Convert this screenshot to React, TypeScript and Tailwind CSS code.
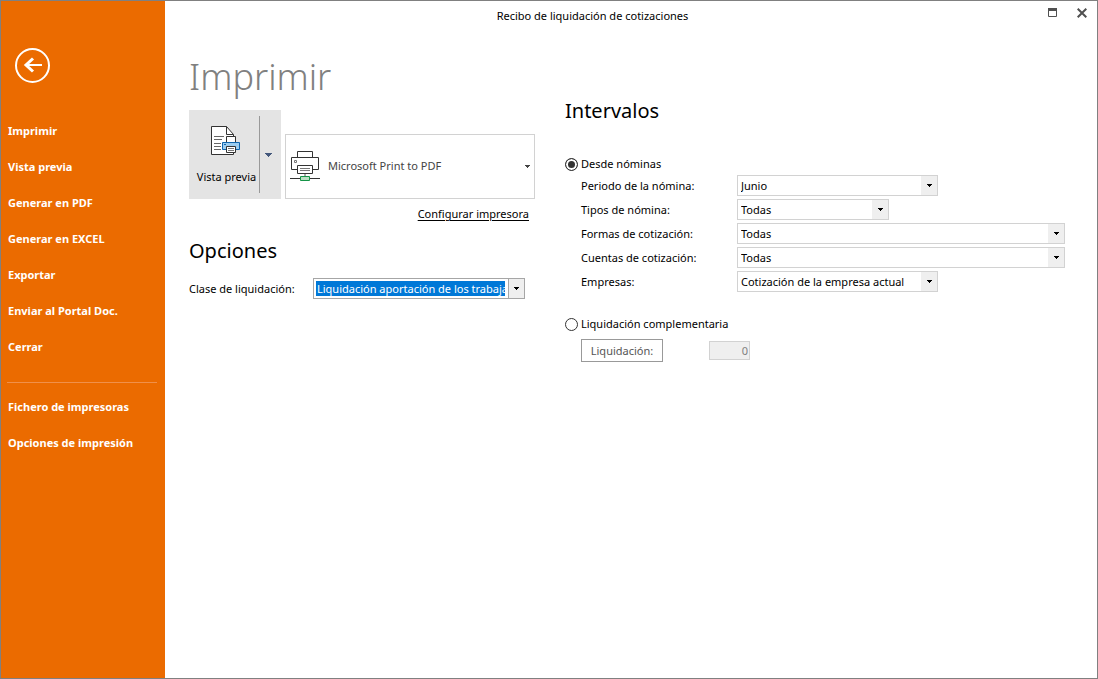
import type { ReactNode } from "react";

const primaryActions = [
  "Imprimir",
  "Vista previa",
  "Generar en PDF",
  "Generar en EXCEL",
  "Exportar",
  "Enviar al Portal Doc.",
  "Cerrar",
];
const secondaryActions = ["Fichero de impresoras", "Opciones de impresión"];

const ranges = [
  { id: "periodo", label: "Periodo de la nómina:", value: "Junio", width: "w-[201px]" },
  { id: "tipos", label: "Tipos de nómina:", value: "Todas", width: "w-[152px]" },
  { id: "formas", label: "Formas de cotización:", value: "Todas", width: "w-[328px]" },
  { id: "cuentas", label: "Cuentas de cotización:", value: "Todas", width: "w-[328px]" },
  { id: "empresas", label: "Empresas:", value: "Cotización de la empresa actual", width: "w-[201px]" },
];

function Caret({ className = "text-black" }: { className?: string }) {
  return (
    <svg width="5" height="3" viewBox="0 0 5 3" className={className} shapeRendering="crispEdges" aria-hidden="true">
      <path d="M0 0h5v1H4v1H3v1H2V2H1V1H0z" fill="currentColor" />
    </svg>
  );
}

function RangeSelect({ id, value, width }: { id: string; value: string; width: string }) {
  return (
    <div className={`relative h-[21px] max-w-full border border-[#d2d2d2] ${width}`}>
      <select id={id} className="block h-full w-full appearance-none bg-white pr-4 pl-[3px] outline-none">
        <option>{value}</option>
      </select>
      <span className="pointer-events-none absolute inset-y-0 right-0 flex w-4 items-center justify-center bg-[#efefef]">
        <Caret />
      </span>
    </div>
  );
}

function NavItem({ children }: { children: ReactNode }) {
  return (
    <li>
      <button type="button" className="block h-9 w-full pl-[7px] text-left font-bold">
        {children}
      </button>
    </li>
  );
}

function PreviewIcon() {
  return (
    <svg width="30" height="31" viewBox="0 0 30 31" fill="none" aria-hidden="true">
      <path d="M1.5 1.5h15l7 8v20h-22z" fill="#fff" stroke="#333" />
      <path d="M16.5 1.5v8h7" stroke="#333" />
      <path d="M4 11.5h10M4 14.5h8M4 18.5h7M4 21.5h7M4 24.5h7" stroke="#666" />
      <path d="M16.5 11.5h9v6h-9z" fill="#fff" stroke="#333" />
      <path d="M12.5 17.5h17v7h-17z" fill="#9ccdf0" stroke="#0f65ad" />
      <path d="M14 19.5h2" stroke="#0f65ad" />
      <path d="M16.5 21.5h9v6h-9z" fill="#fff" stroke="#333" />
      <path d="M18 23.5h6M18 25.5h6" stroke="#777" />
    </svg>
  );
}

function PrinterIcon() {
  return (
    <svg width="30" height="31" viewBox="0 0 30 31" fill="none" aria-hidden="true">
      <path d="M7.5 6.5v-6h15v6" fill="#fff" stroke="#333" />
      <path d="M7.5 18.5h-6v-12h27v12h-6" fill="#fff" stroke="#333" />
      <path d="M4.5 9.5h2v2h-2z" stroke="#777" />
      <path d="M7.5 14.5h15v8h-15z" fill="#fff" stroke="#333" />
      <path d="M10 17.5h10M10 19.5h10" stroke="#777" />
      <path d="M15 23v2" stroke="#aaa" strokeWidth="2" />
      <path d="M0 27.5h30" stroke="#333" />
      <path d="M10.5 25.5h9v4h-9z" fill="#b9dfc2" stroke="#159447" />
    </svg>
  );
}

const radioClass =
  "m-0 size-[13px] shrink-0 appearance-none rounded-full border border-[#333] bg-white checked:bg-[#333] checked:shadow-[inset_0_0_0_2px_#fff]";

export default function App() {
  return (
    <div className="flex min-h-screen border border-[#808080] bg-white font-['Noto_Sans','Segoe_UI',sans-serif] text-[11px] leading-4 text-black">
      <aside className="w-[164px] shrink-0 bg-[#eb6b00] pt-[47px] text-white">
        <button type="button" aria-label="Volver" className="ml-[14px] block">
          <svg width="35" height="35" viewBox="0 0 35 35" fill="none" stroke="currentColor" aria-hidden="true">
            <circle cx="17.5" cy="17.5" r="16.5" strokeWidth="2" />
            <path d="M27 17H11" strokeWidth="2" />
            <path d="M18 10.5L11 17l7 6.5" strokeWidth="3" />
          </svg>
        </button>
        <nav className="pt-[30px]">
          <ul>
            {primaryActions.map((action) => (
              <NavItem key={action}>{action}</NavItem>
            ))}
          </ul>
          <hr className="mr-2 ml-[6px] mt-[17px] mb-[6px] border-[#f0904a]" />
          <ul>
            {secondaryActions.map((action) => (
              <NavItem key={action}>{action}</NavItem>
            ))}
          </ul>
        </nav>
      </aside>

      <div className="flex min-w-0 flex-1 flex-col">
        <header className="flex h-[30px] items-center">
          <h1 className="flex-1 pr-7 text-center">Recibo de liquidación de cotizaciones</h1>
          <div className="flex items-center gap-5 pr-[10px] pb-[7px] text-[#505050]">
            <button type="button" aria-label="Maximizar">
              <svg width="9" height="9" viewBox="0 0 9 9" fill="none" className="block" aria-hidden="true">
                <path d="M.5.5h8v8h-8z" stroke="currentColor" />
                <path d="M0 0h9v3H0z" fill="currentColor" />
              </svg>
            </button>
            <button type="button" aria-label="Cerrar ventana">
              <svg width="10" height="10" viewBox="0 0 10 10" className="block" aria-hidden="true">
                <path d="M.7.7l8.6 8.6M9.3.7L.7 9.3" stroke="currentColor" strokeWidth="2" />
              </svg>
            </button>
          </div>
        </header>

        <main className="flex gap-[30px] pl-6">
          <section className="w-[346px] shrink-0 pt-[22px]">
            <h2 className="text-4xl leading-[48px] font-[350] text-[#808080]">Imprimir</h2>
            <div className="mt-[9px] flex items-end gap-1">
              <div className="flex h-[89px] w-[92px] bg-[#e4e4e4]">
                <button type="button" className="flex w-[70px] flex-col items-center pt-[15px] pl-[5px]">
                  <span className="pr-1">
                    <PreviewIcon />
                  </span>
                  <span className="mt-[13px] whitespace-nowrap">Vista previa</span>
                </button>
                <button
                  type="button"
                  aria-label="Más opciones de vista previa"
                  className="my-[6px] flex flex-1 items-center border-l border-[#999] pl-[5px]"
                >
                  <svg width="7" height="4" viewBox="0 0 7 4" shapeRendering="crispEdges" aria-hidden="true">
                    <path d="M0 0h7v1H6v1H5v1H4v1H3V3H2V2H1V1H0z" fill="#44587c" />
                  </svg>
                </button>
              </div>
              <button
                type="button"
                className="flex h-[65px] flex-1 items-center border border-[#d2d2d2] px-1 pb-px text-[#444]"
              >
                <PrinterIcon />
                <span className="flex-1 pl-2 text-left">Microsoft Print to PDF</span>
                <Caret className="text-[#444]" />
              </button>
            </div>
            <div className="mt-[7px] pr-[6px] text-right">
              <a href="#configurar" className="underline underline-offset-2">
                Configurar impresora
              </a>
            </div>

            <h2 className="mt-[15px] text-xl leading-7">Opciones</h2>
            <div className="mt-[13px] flex items-center">
              <label htmlFor="clase" className="w-[124px]">
                Clase de liquidación:
              </label>
              <div className="relative h-[21px] w-[212px] border border-[#a6a6a6] py-[2px] pr-[19px] pl-[2px]">
                <select
                  id="clase"
                  className="block h-full w-full appearance-none bg-[#0078d7] pl-px text-white outline-none"
                >
                  <option>Liquidación aportación de los trabajadores</option>
                </select>
                <span className="pointer-events-none absolute inset-y-0 right-0 flex w-4 items-center justify-center border-l border-[#a6a6a6] bg-[#efefef]">
                  <Caret />
                </span>
              </div>
            </div>
          </section>

          <section className="min-w-0 flex-1 pt-[66px]">
            <h2 id="intervalos" className="text-xl leading-7">
              Intervalos
            </h2>
            <fieldset aria-labelledby="intervalos" className="mt-[31px]">
              <label className="flex items-center gap-[3px]">
                <input type="radio" name="intervalo" defaultChecked className={radioClass} />
                Desde nóminas
              </label>
              <div className="mt-[3px] flex flex-col gap-[3px] pl-4">
                {ranges.map((range) => (
                  <div key={range.id} className="flex items-center">
                    <label htmlFor={range.id} className="w-[156px] shrink-0">
                      {range.label}
                    </label>
                    <RangeSelect id={range.id} value={range.value} width={range.width} />
                  </div>
                ))}
              </div>
              <label className="mt-6 flex items-center gap-[3px]">
                <input type="radio" name="intervalo" className={radioClass} />
                Liquidación complementaria
              </label>
              <div className="mt-[7px] flex items-center gap-[46px] pl-4">
                <button type="button" className="h-[23px] w-[82px] border border-[#999] text-[#555]">
                  Liquidación:
                </button>
                <input
                  type="text"
                  aria-label="Número de liquidación"
                  defaultValue="0"
                  disabled
                  className="h-[19px] w-[41px] border border-[#d2d2d2] bg-[#efefef] pr-px text-right text-[#808080]"
                />
              </div>
            </fieldset>
          </section>
        </main>
      </div>
    </div>
  );
}
